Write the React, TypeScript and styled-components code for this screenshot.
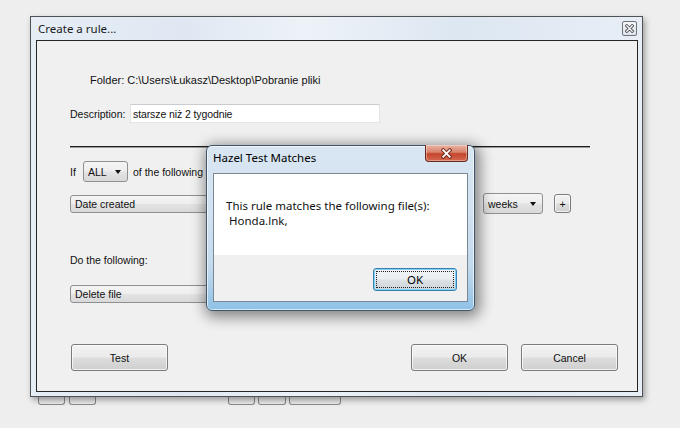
import React from 'react';
import styled, {createGlobalStyle} from 'styled-components';

const GlobalStyle = createGlobalStyle`
  html, body {
    margin: 0;
    padding: 0;
    background: #eeeeee;
  }
  body {
    width: 680px;
    height: 428px;
    overflow: hidden;
    font-family: "Liberation Sans", Arial, sans-serif;
    color: #000;
  }
`;

const Page = styled.div`
  position: relative;
  width: 680px;
  height: 428px;
  box-sizing: border-box;
  padding: 16px 0 0 30px;
`;

const Window = styled.div`
  width: 613px;
  height: 381px;
  box-sizing: border-box;
  border: 1px solid #505356;
  background: linear-gradient(90deg, #e6edf5 0%, #dfe8f2 25%, #edf2f8 45%, #dde7f1 70%, #e7eef6 100%);
  box-shadow: 2px 3px 6px rgba(0, 0, 0, 0.35);
  display: flex;
  flex-direction: column;
  padding: 0 4px 4px 5px;
  position: relative;
  z-index: 1;
`;

const TitleBar = styled.div`
  height: 23px;
  display: flex;
  align-items: center;
  padding: 0 1px 0 2px;
`;

const Title = styled.span`
  font-family: "Noto Sans", "Open Sans", sans-serif;
  font-size: 11.5px;
  color: #1b1b1b;
  flex: 1;
`;

const CloseBox = styled.div`
  width: 15px;
  height: 15px;
  box-sizing: border-box;
  border: 1px solid #6f7479;
  border-radius: 2px;
  background: linear-gradient(#f4f6f9, #dfe5ec);
  display: flex;
  align-items: center;
  justify-content: center;
  margin-bottom: 1px;
`;

const Client = styled.div`
  flex: 1;
  border: 1px solid #262626;
  background: #f0f0f0;
  display: flex;
  flex-direction: column;
  padding: 0 19px 0 33px;
  font-size: 10.5px;
  color: #111;
`;

const Row = styled.div<{$top: number; $h: number; $pl?: number}>`
  display: flex;
  align-items: center;
  margin-top: ${p => p.$top}px;
  height: ${p => p.$h}px;
  padding-left: ${p => p.$pl ?? 0}px;
  white-space: nowrap;
`;

const FolderText = styled.span`
  font-size: 11px;
`;

const Label = styled.span<{$w?: number; $ml?: number}>`
  display: inline-block;
  width: ${p => (p.$w ? `${p.$w}px` : 'auto')};
  margin-left: ${p => p.$ml ?? 0}px;
`;

const TextBox = styled.div<{$w: number; $ml?: number}>`
  width: ${p => p.$w}px;
  height: 19px;
  margin-left: ${p => p.$ml ?? 0}px;
  box-sizing: border-box;
  background: #fff;
  border: 1px solid #e2e5e8;
  border-top-color: #c9ccd0;
  display: flex;
  align-items: center;
  padding-left: 2px;
  letter-spacing: -0.1px;
  flex-shrink: 0;
`;

const Separator = styled.div`
  margin-top: 23px;
  width: 520px;
  height: 1px;
  background: #1e1e1e;
  box-shadow: 0 1px 0 #9a9a9a;
`;

const Combo = styled.div<{$w: number; $h?: number; $ml?: number}>`
  width: ${p => p.$w}px;
  height: ${p => p.$h ?? 18}px;
  margin-left: ${p => p.$ml ?? 0}px;
  box-sizing: border-box;
  border: 1px solid #8f9091;
  border-radius: 3px;
  background: linear-gradient(#f4f4f4 0%, #eeeeee 48%, #e3e3e3 52%, #d9d9d9 100%);
  display: flex;
  align-items: center;
  padding: 0 6px 0 4px;
  flex-shrink: 0;
`;

const Arrow = styled.span`
  margin-left: auto;
  width: 0;
  height: 0;
  border-left: 3.5px solid transparent;
  border-right: 3.5px solid transparent;
  border-top: 4px solid #111;
`;

const Button = styled.div<{$w: number; $h: number; $ml?: number}>`
  width: ${p => p.$w}px;
  height: ${p => p.$h}px;
  margin-left: ${p => p.$ml ?? 0}px;
  box-sizing: border-box;
  border: 1px solid #7b7b7b;
  border-radius: 3px;
  background: linear-gradient(#f2f2f2 0%, #ebebeb 48%, #dddddd 52%, #cfcfcf 100%);
  box-shadow: inset 0 0 0 1px rgba(255, 255, 255, 0.7);
  display: flex;
  align-items: center;
  justify-content: center;
  flex-shrink: 0;
`;

const Spacer = styled.div`
  flex: 1;
`;

const StubRow = styled.div`
  display: flex;
  height: 8px;
`;

const Stub = styled.div<{$w: number; $ml: number}>`
  width: ${p => p.$w}px;
  margin-left: ${p => p.$ml}px;
  height: 8px;
  box-sizing: border-box;
  border: 1px solid #8a8a8a;
  border-top: none;
  border-radius: 0 0 3px 3px;
  background: linear-gradient(#e2e2e2, #ececec);
`;

const Dialog = styled.div`
  position: absolute;
  left: 206px;
  top: 145px;
  width: 269px;
  height: 166px;
  box-sizing: border-box;
  border: 1px solid #3d566d;
  border-radius: 6px;
  background: linear-gradient(180deg, #d9e6f2 0%, #d2e2f1 40%, #c2d9ed 75%, #8fc1e6 100%);
  box-shadow: inset 0 0 0 1px rgba(255, 255, 255, 0.65), 2px 3px 14px 3px rgba(0, 0, 0, 0.45);
  z-index: 5;
  display: flex;
  flex-direction: column;
  padding: 0 6px 8px 6px;
  font-family: "Noto Sans", "Open Sans", sans-serif;
`;

const DialogTitleBar = styled.div`
  height: 27px;
  display: flex;
  align-items: flex-start;
`;

const DialogTitle = styled.span`
  font-size: 11.5px;
  margin-top: 4px;
  flex: 1;
`;

const RedClose = styled.div`
  width: 43px;
  height: 17px;
  margin-top: -1px;
  box-sizing: border-box;
  border: 1px solid #6b2a1f;
  border-top: none;
  border-radius: 0 0 4px 4px;
  background: linear-gradient(#eab3a4 0%, #d9826c 45%, #c4452c 55%, #d4694f 100%);
  box-shadow: inset 0 0 0 1px rgba(255, 255, 255, 0.35);
  display: flex;
  align-items: center;
  justify-content: center;
`;

const DialogClient = styled.div`
  flex: 1;
  border: 1px solid #7a8896;
  display: flex;
  flex-direction: column;
  background: #f0f0f0;
`;

const Message = styled.div`
  height: 81px;
  background: #fff;
  box-sizing: border-box;
  padding: 24px 0 0 12px;
  font-size: 11.5px;
  line-height: 15px;
  white-space: pre;
  color: #111;
`;

const DialogButtons = styled.div`
  flex: 1;
  display: flex;
  justify-content: flex-end;
  align-items: flex-start;
  padding: 13px 10px 0 0;
`;

const FocusButton = styled.div`
  position: relative;
  width: 84px;
  height: 23px;
  box-sizing: border-box;
  border: 1px solid #3c7fb1;
  border-radius: 3px;
  background: linear-gradient(#f1f5f8 0%, #eaeef1 48%, #dce2e6 52%, #cdd4d9 100%);
  box-shadow: inset 0 0 0 1px #7fd2f5;
  display: flex;
  align-items: center;
  justify-content: center;
  font-size: 11.5px;

  &::after {
    content: '';
    position: absolute;
    inset: 2px;
    border: 1px dotted #222;
  }
`;

function XIcon({size, color, outline}: {size: number; color: string; outline: string}) {
  return (
    <svg width={size} height={size} viewBox="0 0 10 10">
      <path d="M2 2 L8 8 M8 2 L2 8" stroke={outline} strokeWidth={3.4} strokeLinecap="square"/>
      <path d="M2 2 L8 8 M8 2 L2 8" stroke={color} strokeWidth={1.6} strokeLinecap="square"/>
    </svg>
  );
}

function App() {
    return (
        <Page>
            <GlobalStyle/>
            <Window>
                <TitleBar>
                    <Title>Create a rule...</Title>
                    <CloseBox>
                        <XIcon size={9} color="#f4f4f4" outline="#4a4f55"/>
                    </CloseBox>
                </TitleBar>
                <Client>
                    <Row $top={32} $h={14} $pl={20}>
                        <FolderText>Folder: C:\Users\Łukasz\Desktop\Pobranie pliki</FolderText>
                    </Row>
                    <Row $top={17} $h={19}>
                        <Label $w={60}>Description:</Label>
                        <TextBox $w={250}>starsze niż 2 tygodnie</TextBox>
                    </Row>
                    <Separator/>
                    <Row $top={14} $h={21}>
                        <Label $w={13}>If</Label>
                        <Combo $w={45} $h={21}>ALL<Arrow/></Combo>
                        <Label $ml={5}>of the following</Label>
                    </Row>
                    <Row $top={11} $h={21}>
                        <Combo $w={200}>Date created<Arrow/></Combo>
                        <Combo $w={120} $ml={10}><Arrow/></Combo>
                        <TextBox $w={60} $ml={10}/>
                        <Combo $w={60} $h={21} $ml={13}>weeks<Arrow/></Combo>
                        <Button $w={17} $h={19} $ml={11}>+</Button>
                    </Row>
                    <Row $top={39} $h={14}>
                        <Label>Do the following:</Label>
                    </Row>
                    <Row $top={18} $h={18}>
                        <Combo $w={200}>Delete file<Arrow/></Combo>
                    </Row>
                    <Row $top={41} $h={27}>
                        <Button $w={97} $h={27} $ml={1}>Test</Button>
                        <Spacer/>
                        <Button $w={97} $h={27}>OK</Button>
                        <Button $w={97} $h={27} $ml={13}>Cancel</Button>
                    </Row>
                </Client>
            </Window>
            <StubRow>
                <Stub $w={27} $ml={8}/>
                <Stub $w={27} $ml={4}/>
                <Stub $w={27} $ml={132}/>
                <Stub $w={28} $ml={3}/>
                <Stub $w={52} $ml={3}/>
            </StubRow>
            <Dialog>
                <DialogTitleBar>
                    <DialogTitle>Hazel Test Matches</DialogTitle>
                    <RedClose>
                        <XIcon size={11} color="#ffffff" outline="#7a2c20"/>
                    </RedClose>
                </DialogTitleBar>
                <DialogClient>
                    <Message>{'This rule matches the following file(s):\n Honda.lnk,'}</Message>
                    <DialogButtons>
                        <FocusButton>OK</FocusButton>
                    </DialogButtons>
                </DialogClient>
            </Dialog>
        </Page>
    );
}

export default App;
